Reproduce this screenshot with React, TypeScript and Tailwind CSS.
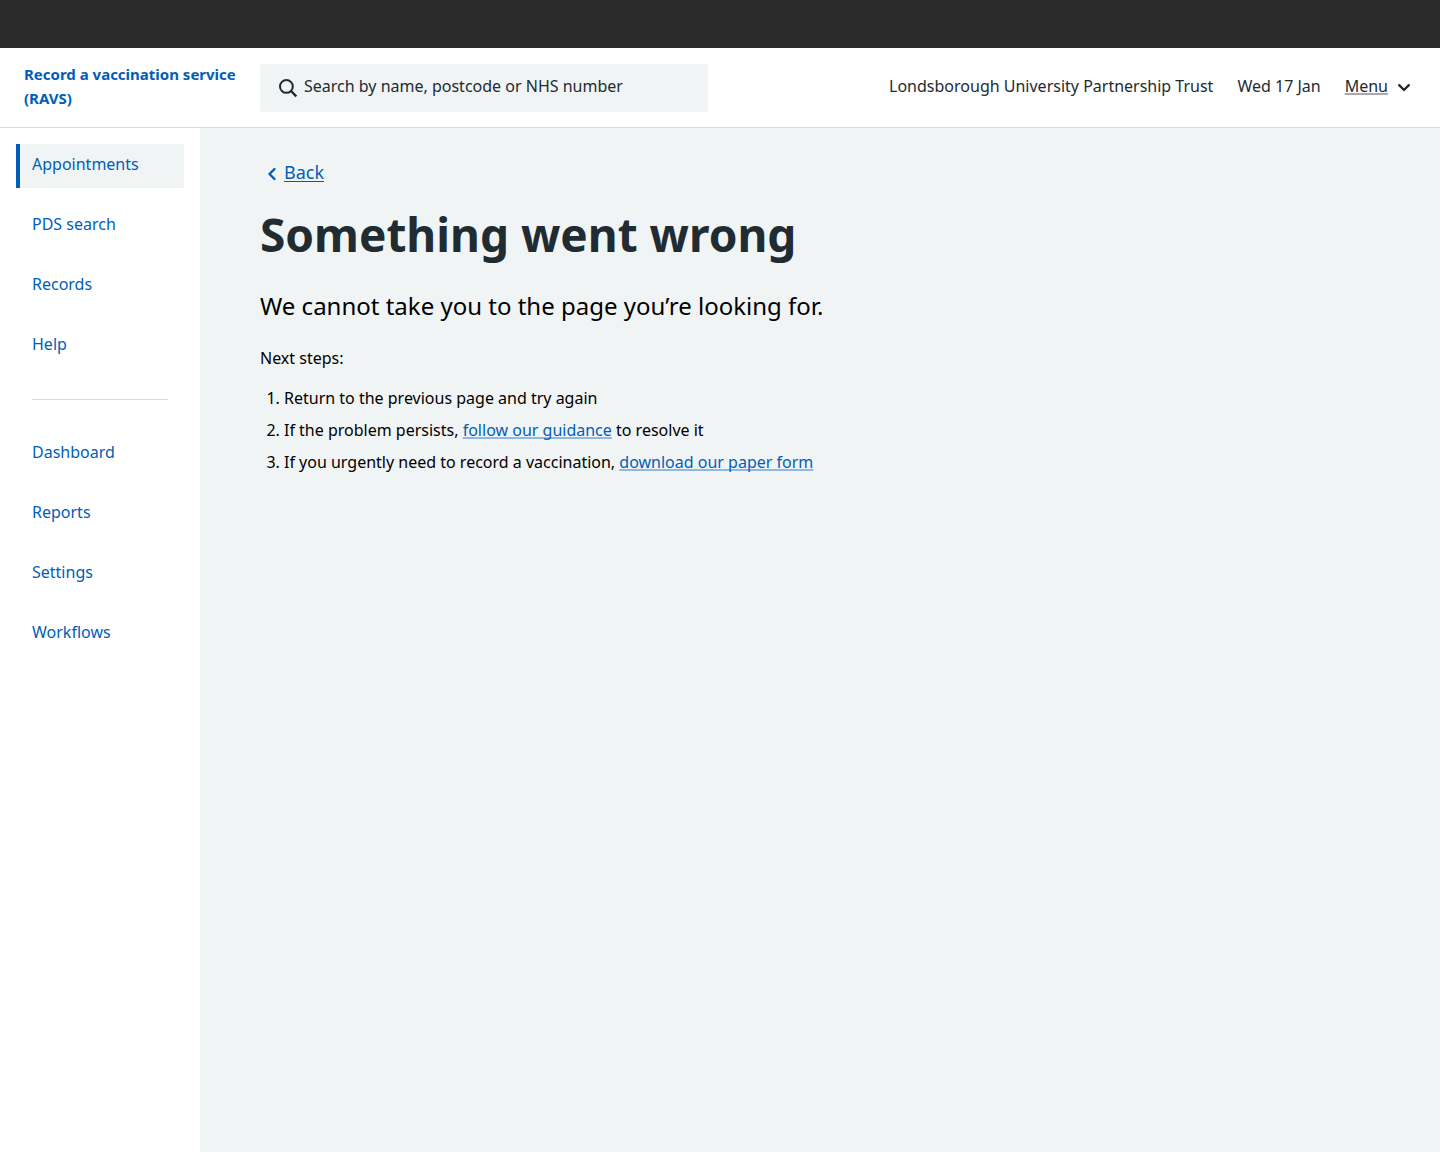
const primaryLinks = ["Appointments", "PDS search", "Records", "Help"];
const secondaryLinks = ["Dashboard", "Reports", "Settings", "Workflows"];

function NavList({ items, current }: { items: string[]; current?: string }) {
  return (
    <ul className="flex flex-col gap-4">
      {items.map((item) => (
        <li key={item}>
          <a
            href="#"
            aria-current={item === current ? "page" : undefined}
            className={
              item === current
                ? "block border-l-4 border-[#005eb8] bg-[#f0f4f5] pt-2 pb-3 pl-3"
                : "block border-l-4 border-transparent pt-2 pb-3 pl-3"
            }
          >
            {item}
          </a>
        </li>
      ))}
    </ul>
  );
}

function Header() {
  return (
    <header className="flex h-20 items-center border-b border-[#d8dde0] bg-white px-6">
      <a href="#" className="w-[236px] shrink-0 pb-1 text-[15px] leading-6 font-bold text-[#005eb8]">
        Record a vaccination service
        <br />
        (RAVS)
      </a>
      <form role="search" className="flex h-12 w-full max-w-md items-center bg-[#f0f4f5] pl-4">
        <svg
          viewBox="0 0 24 24"
          className="size-6 shrink-0"
          fill="none"
          stroke="#212b32"
          strokeWidth="2"
          aria-hidden="true"
        >
          <circle cx="10.4" cy="10.4" r="6.4" />
          <path d="M15 15l5.3 5.3" strokeWidth="2.4" />
        </svg>
        <input
          type="search"
          aria-label="Search by name, postcode or NHS number"
          placeholder="Search by name, postcode or NHS number"
          className="h-full min-w-0 flex-1 bg-transparent pb-1 pl-1 placeholder:text-[#212b32] placeholder:opacity-100"
        />
      </form>
      <div className="ml-auto flex shrink-0 items-center gap-6 pb-1 pl-6">
        <span>Londsborough University Partnership Trust</span>
        <span>Wed 17 Jan</span>
        <button type="button" className="flex items-center gap-1">
          <span className="underline decoration-[#a6aaad] decoration-2 underline-offset-1 [text-decoration-skip-ink:none]">
            Menu
          </span>
          <svg
            viewBox="0 0 24 24"
            className="size-6"
            fill="none"
            stroke="#212b32"
            strokeWidth="2.4"
            strokeLinecap="round"
            strokeLinejoin="round"
            aria-hidden="true"
          >
            <path d="M7.2 11.2l4.8 4.8 4.8-4.8" />
          </svg>
        </button>
      </div>
    </header>
  );
}

const inlineLink =
  "text-[#005eb8] underline decoration-[#8fb9df] decoration-2 underline-offset-1 [text-decoration-skip-ink:none]";

export default function App() {
  return (
    <div className="flex min-h-screen flex-col bg-white font-['Noto_Sans',sans-serif] text-base text-[#212b32]">
      <div className="h-12 bg-[#2b2b2b]" />
      <Header />
      <div className="flex flex-1">
        <nav aria-label="Main" className="w-[200px] shrink-0 p-4 text-[#005eb8]">
          <NavList items={primaryLinks} current="Appointments" />
          <hr className="mx-4 mb-8 h-8 border-t-0 border-b border-[#d8dde0]" />
          <NavList items={secondaryLinks} />
        </nav>
        <main className="flex-1 bg-[#f0f4f5] px-[60px] pt-8 text-black">
          <a href="#" className="inline-flex items-center text-lg leading-6 text-[#005eb8]">
            <svg
              viewBox="0 0 24 24"
              className="size-6"
              fill="none"
              stroke="currentColor"
              strokeWidth="2.4"
              strokeLinecap="round"
              strokeLinejoin="round"
              aria-hidden="true"
            >
              <path d="M14.5 9l-5 5 5 5" />
            </svg>
            <span className="underline underline-offset-2">Back</span>
          </a>
          <h1 className="mt-4 text-[46px] leading-14 font-bold text-[#212b32]">Something went wrong</h1>
          <p className="mt-7 text-2xl leading-8">We cannot take you to the page you’re looking for.</p>
          <p className="mt-6">Next steps:</p>
          <ol className="mt-4 flex list-decimal flex-col gap-2 pl-6">
            <li>Return to the previous page and try again</li>
            <li>
              If the problem persists,{" "}
              <a href="#" className={inlineLink}>
                follow our guidance
              </a>{" "}
              to resolve it
            </li>
            <li>
              If you urgently need to record a vaccination,{" "}
              <a href="#" className={inlineLink}>
                download our paper form
              </a>
            </li>
          </ol>
        </main>
      </div>
    </div>
  );
}
